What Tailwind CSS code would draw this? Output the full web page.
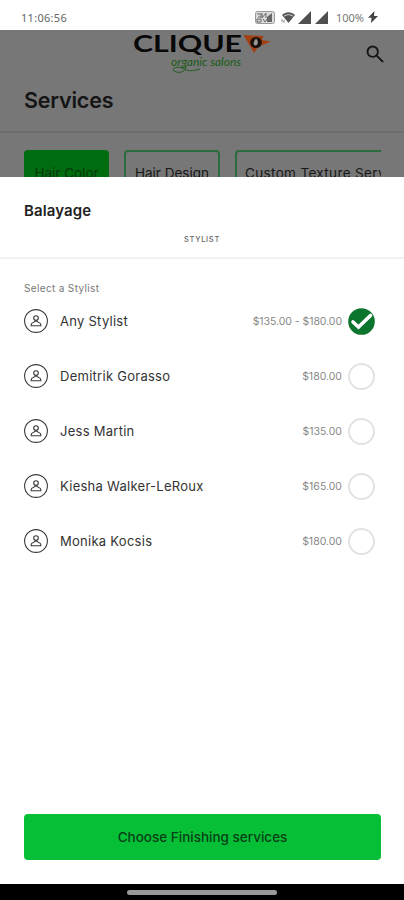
<!DOCTYPE html>
<html lang="en"><head><meta charset="utf-8"><title>Services</title>
<script src="https://cdn.jsdelivr.net/npm/@tailwindcss/browser@4"></script></head>
<body class="w-[404px] h-[900px] overflow-hidden flex flex-col bg-white font-['Inter',sans-serif] text-[#222]">
<svg class="hidden">
  <symbol id="person" viewBox="0 0 24 24"><g fill="none" stroke="#3a3a3a" stroke-width="1.1"><circle cx="12" cy="12" r="11.4"/><circle cx="12" cy="9.1" r="2.3"/><path d="M7.2 16.8v-1.2c0-1.2 1.3-1.9 2.6-2.3L11 12.2h2l1.2 1.1c1.3.4 2.6 1.1 2.6 2.3v1.2z"/></g></symbol>
</svg>
<header class="h-[30px] shrink-0 flex items-center pl-[21px] pr-[26px] pt-[4px]">
  <span class="font-['Noto_Sans',sans-serif] text-[11px] leading-none text-[#666] tracking-[0.3px]">11:06:56</span>
  <div class="ml-auto flex items-center">
    <svg class="w-5 h-[13px]" viewBox="0 0 20 13"><rect x=".5" y=".5" width="19" height="12" rx="2" fill="#ddd" stroke="#999"/><path d="M2 3h4v3H3M7 2v5l4-5v5M2 8h4v3H2zM8 8l2 3 2-3" fill="none" stroke="#666"/><path d="M12 6l5-4v9h-5z" fill="#666"/></svg>
    <svg class="w-[15px] h-3 ml-[6px]" viewBox="0 0 15 12"><path d="M1 4C5 .3 10 .3 14 4L7.5 12z" fill="#555"/><path d="M3 5.2c3-2 6-2 9 0" stroke="#ddd" fill="none"/><path d="M1 8v3M3 9v3" stroke="#888"/></svg>
    <svg class="w-[13px] h-[13px] ml-[2px]" viewBox="0 0 13 13"><path d="M13 0v13H0z" fill="#505050"/></svg>
    <svg class="w-[13px] h-[13px] ml-[4px]" viewBox="0 0 13 13"><path d="M13 0v13H0z" fill="#505050"/></svg>
    <span class="ml-[8px] font-['Noto_Sans',sans-serif] text-[11px] leading-none text-[#777]">100%</span>
    <svg class="w-[10px] h-3 ml-[4px]" viewBox="0 0 10 12"><path d="M6.5 0L0 6.8h3.5L3 12l7-7H6z" fill="#444"/></svg>
  </div>
</header>
<section class="h-[147px] shrink-0 bg-[#777] overflow-hidden flex flex-col">
  <div class="h-[48px] shrink-0 flex pl-[132px] pr-[20px]">
    <svg class="w-[144px] h-[48px] shrink-0" viewBox="132 30 144 48">
      <text x="133" y="52" font-family="Lato, sans-serif" font-weight="700" font-size="23.5" textLength="109" lengthAdjust="spacingAndGlyphs" fill="#080808">CLIQUE</text>
      <path d="M243.5 35l20 1-1.5 4 9 1.500-8 3.500-3-1-6 9z" fill="#a34013"/>
      <ellipse cx="256" cy="42.500" rx="5.800" ry="5.500" fill="#1b100b"/><path d="M256 38.500c3 3 2 7-.5 7-3-.5-2-4 .5-7z" fill="#999"/>
      <text x="171" y="66" font-family="Lato, sans-serif" font-style="italic" font-size="12" textLength="70" lengthAdjust="spacingAndGlyphs" fill="#195b17">organic salons</text>
      <path d="M186 66c0 6-7 8-12 5-3-3 4-5 8-3 7 4 10 3 18 1" stroke="#195b17" stroke-width=".9" fill="none"/>
    </svg>
    <svg class="w-[18px] h-[18px] ml-auto mt-[15px]" viewBox="0 0 18 18" fill="none" stroke="#161616" stroke-width="1.900"><circle cx="6.700" cy="6.700" r="5.200"/><path d="M10.700 10.700L17 17"/></svg>
  </div>
  <h1 class="h-[55px] shrink-0 pl-6 pt-[8px] text-[21.5px] leading-7 font-semibold text-[#151515] tracking-[-0.2px] border-b-2 border-[#6e6e6e]">Services</h1>
  <div class="ml-6 mr-[23px] mt-[17px] overflow-hidden flex shrink-0 gap-[15px] text-[13.5px] leading-[16px] text-[#181818] whitespace-nowrap">
    <div class="w-[85px] h-[46px] pt-[15px] shrink-0 rounded bg-[#006c10] text-center text-[#06380c]">Hair Color</div>
    <div class="w-[96px] h-[46px] pt-[13px] shrink-0 rounded border-2 border-[#2b6c3e] text-center">Hair Design</div>
    <div class="w-[180px] h-[46px] pt-[13px] pl-[8px] shrink-0 rounded border-2 border-[#2b6c3e] tracking-[0.35px]">Custom Texture Services</div>
  </div>
</section>
<main class="h-[707px] shrink-0 flex flex-col bg-white">
  <h2 class="pl-6 pt-[24px] text-[15px] leading-[20px] font-semibold tracking-[0.1px]">Balayage</h2>
  <div class="h-[38px] pt-[13px] border-b-2 border-[#f1f1f1] text-center text-[7.5px] leading-[12px] font-medium text-[#666] tracking-[0.7px]">STYLIST</div>
  <p class="pl-6 pt-[22px] text-[10px] leading-[14px] text-[#777] tracking-[0.35px]">Select a Stylist</p>
  <ul class="px-6 -mt-px text-[13px] tracking-[0.27px] text-[#333]">
    <li class="h-[55px] flex items-center"><svg class="w-6 h-6 mb-px"><use href="#person"/></svg><span class="ml-3">Any Stylist</span><span class="ml-auto mr-[6px] text-[10.5px] text-[#888] tracking-[-0.05px]">$135.00 - $180.00</span><svg class="w-[27px] h-[27px] mr-[5px]" viewBox="0 0 27 27"><circle cx="13.5" cy="13.5" r="13.3" fill="#0b742d"/><path d="M5 14l5.5 5L22.500 7.500" fill="none" stroke="#fff" stroke-width="3.600" stroke-linecap="round"/></svg></li>
    <li class="h-[55px] flex items-center"><svg class="w-6 h-6 mb-px"><use href="#person"/></svg><span class="ml-3">Demitrik Gorasso</span><span class="ml-auto mr-[6px] text-[10.5px] text-[#888] tracking-normal">$180.00</span><i class="w-[27px] h-[27px] mr-[5px] rounded-full border-2 border-[#e2e2e2]"></i></li>
    <li class="h-[55px] flex items-center"><svg class="w-6 h-6 mb-px"><use href="#person"/></svg><span class="ml-3">Jess Martin</span><span class="ml-auto mr-[6px] text-[10.5px] text-[#888] tracking-normal">$135.00</span><i class="w-[27px] h-[27px] mr-[5px] rounded-full border-2 border-[#e2e2e2]"></i></li>
    <li class="h-[55px] flex items-center"><svg class="w-6 h-6 mb-px"><use href="#person"/></svg><span class="ml-3">Kiesha Walker-LeRoux</span><span class="ml-auto mr-[6px] text-[10.5px] text-[#888] tracking-normal">$165.00</span><i class="w-[27px] h-[27px] mr-[5px] rounded-full border-2 border-[#e2e2e2]"></i></li>
    <li class="h-[55px] flex items-center"><svg class="w-6 h-6 mb-px"><use href="#person"/></svg><span class="ml-3">Monika Kocsis</span><span class="ml-auto mr-[6px] text-[10.5px] text-[#888] tracking-normal">$180.00</span><i class="w-[27px] h-[27px] mr-[5px] rounded-full border-2 border-[#e2e2e2]"></i></li>
  </ul>
  <button class="mt-auto mb-6 ml-6 w-[357px] h-[46px] rounded bg-[#06bf36] text-[13.5px] font-medium text-[#083f15]">Choose Finishing services</button>
</main>
<footer class="h-4 shrink-0 bg-black flex justify-center pt-[6px]"><div class="w-[150px] h-[5px] rounded-full bg-[#999]"></div></footer>
</body></html>
